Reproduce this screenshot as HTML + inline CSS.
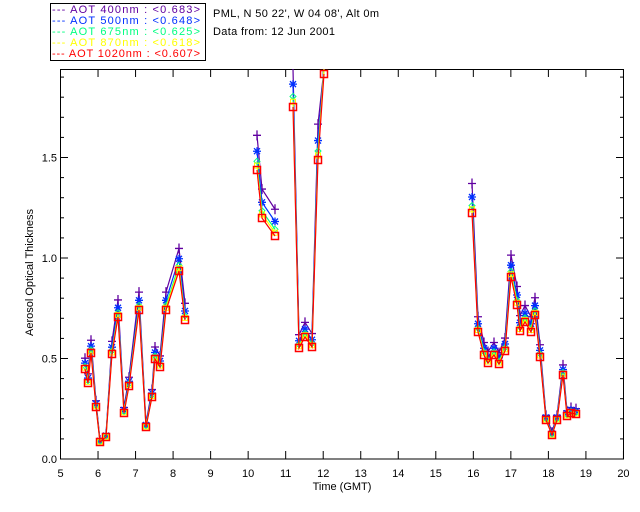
<!DOCTYPE html>
<html><head><style>
body{margin:0;background:#fff;width:640px;height:512px;overflow:hidden}
svg{display:block}
text{font-family:"Liberation Sans",sans-serif;font-size:11px}
</style></head><body>
<svg id="s" width="640" height="512" xmlns="http://www.w3.org/2000/svg">
<rect x="50.5" y="3.5" width="155" height="57" fill="none" stroke="#000" stroke-width="1"/>
<g font-size="11" style="white-space:pre">
<text x="52" y="13" fill="#6000a0" textLength="148" lengthAdjust="spacing">---  AOT  400nm : &lt;0.683&gt;</text>
<text x="52" y="24" fill="#0030ff" textLength="148" lengthAdjust="spacing">---  AOT  500nm : &lt;0.648&gt;</text>
<text x="52" y="35" fill="#00ff80" textLength="148" lengthAdjust="spacing">---  AOT  675nm : &lt;0.625&gt;</text>
<text x="52" y="46" fill="#ffff00" textLength="148" lengthAdjust="spacing">---  AOT  870nm : &lt;0.618&gt;</text>
<text x="52" y="57" fill="#ff0000" textLength="148" lengthAdjust="spacing">---  AOT 1020nm : &lt;0.607&gt;</text>
<text x="213" y="17" fill="#000" textLength="166" lengthAdjust="spacing">PML, N 50 22', W 04 08', Alt 0m</text>
<text x="213" y="35" fill="#000" textLength="122" lengthAdjust="spacing">Data from: 12 Jun 2001</text>
</g>
<rect x="60.5" y="69.5" width="563" height="389.5" fill="none" stroke="#000"/>
<g id="ax"></g>
<g id="data"></g>
<text x="342" y="490" text-anchor="middle">Time (GMT)</text>
<text transform="translate(33,336) rotate(-90)" font-size="10">Aerosol Optical Thickness</text>
</svg>
<script>
var NS="http://www.w3.org/2000/svg";
function el(p,t,a){var e=document.createElementNS(NS,t);for(var k in a)e.setAttribute(k,a[k]);p.appendChild(e);return e;}
var ax=document.getElementById("ax");
for(var i=5;i<=20;i++){var x=60.5+(i-5)*37.53;
 el(ax,"line",{x1:x,y1:459,x2:x,y2:451,stroke:"#000"});
 el(ax,"line",{x1:x,y1:69,x2:x,y2:77,stroke:"#000"});
 var t=el(ax,"text",{x:x,y:477,"text-anchor":"middle"});t.textContent=i;}
for(var j=0;j<=19;j++){var y=459-j*20.1;var L=(j%5==0)?8:4;
 el(ax,"line",{x1:60,y1:y,x2:60+L,y2:y,stroke:"#000"});
 el(ax,"line",{x1:624,y1:y,x2:624-L,y2:y,stroke:"#000"});
 if(j%5==0){var t=el(ax,"text",{x:57,y:y+4,"text-anchor":"end"});t.textContent=(j/10).toFixed(1);}}
var segs=[
[[85,369],[88,383],[91,353],[96,407],[100,442],[106,437],[112,354],[118,317],[124,413],[129,386],[139,310],[146,427],[152,397],[155,359],[160,367],[166,310],[179,271],[185,320]],
[[257,170],[262,218],[275,236]],
[[293,107],[299,348],[305,337],[312,347],[318,160],[324,74]],
[[472,213],[478,332],[484,355],[488,363],[494,355],[499,364],[505,351],[511,277],[517,305],[520,331],[525,322],[531,332],[535,315],[540,357],[546,420],[552,435],[557,420],[563,375],[567,416],[571,413],[576,414]]];
var ser=[["#6000a0",1.12,"plus"],["#0030ff",1.065,"star"],["#00ff80",1.03,"dia"],["#ffff00",1.015,"sq"],["#ff0000",1,"rsq"]];
var d=document.getElementById("data");
ser.forEach(function(s){
 segs.forEach(function(seg){
  var pts=seg.map(function(p){var y=459-(459-p[1])*s[1];return [p[0],Math.max(y,69)];});
  el(d,"polyline",{points:pts.map(function(p){return p.join(",")}).join(" "),fill:"none",stroke:s[0],"stroke-width":1.2});
  pts.forEach(function(p){var x=p[0],y=p[1];
   if(y<=69)return;
   if(s[2]=="plus"){el(d,"path",{d:"M"+(x-4)+" "+y+"h8M"+x+" "+(y-5)+"v10",stroke:s[0],"stroke-width":1.3,fill:"none"});}
   else if(s[2]=="star"){el(d,"path",{d:"M"+(x-4)+" "+y+"h8M"+x+" "+(y-4)+"v8M"+(x-3)+" "+(y-3)+"l6 6M"+(x+3)+" "+(y-3)+"l-6 6",stroke:s[0],"stroke-width":1.3,fill:"none"});}
   else if(s[2]=="dia"){el(d,"path",{d:"M"+x+" "+(y-3)+"l3 3l-3 3l-3 -3z",stroke:s[0],fill:"none"});}
   else if(s[2]=="sq"){el(d,"rect",{x:x-2.5,y:y-2.5,width:5,height:5,stroke:s[0],fill:"none"});}
   else{el(d,"rect",{x:x-3.5,y:y-3.5,width:7,height:7,stroke:s[0],"stroke-width":1.5,fill:"none"});}
  });
 });
});
</script>
</body></html>
